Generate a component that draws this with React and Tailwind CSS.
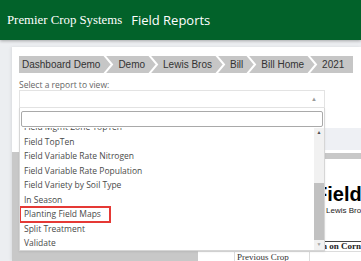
import React from "react";

const crumbs = ["Dashboard Demo", "Demo", "Lewis Bros", "Bill", "Bill Home", "2021"];

const reports = [
    "Field Mgmt Zone TopTen",
    "Field TopTen",
    "Field Variable Rate Nitrogen",
    "Field Variable Rate Population",
    "Field Variety by Soil Type",
    "In Season",
    "Planting Field Maps",
    "Split Treatment",
    "Validate",
];

const Chevron = () => (
    <svg width="18" height="17" viewBox="0 0 18 17" className="block shrink-0">
        <polyline
            points="4,-1 12,8.5 4,18"
            fill="none"
            stroke="#ffffff"
            strokeWidth="2"
        />
    </svg>
);

const Breadcrumb = () => (
    <div className="flex h-[17px] w-fit items-center bg-[#c6c6c6] pl-[3px] pr-[9px] font-['Liberation_Sans',Arial,sans-serif] text-[10px] text-[#333]">
        {crumbs.map((c, i) => (
            <React.Fragment key={c}>
                <span className="whitespace-nowrap leading-[17px]">{c}</span>
                {i < crumbs.length - 1 && <Chevron />}
            </React.Fragment>
        ))}
    </div>
);

const Dropdown = () => (
    <div className="absolute left-[19px] top-[108px] h-[143px] w-[306px] border border-t-0 border-[#d6d6d6] bg-white shadow-[0_1px_2px_rgba(0,0,0,0.08)]">
        <div className="mx-[1px] mt-[3px] h-[16px] rounded-[2px] border border-[#a9a9a9] bg-white" />
        <div className="mt-[1px] flex h-[122px] overflow-hidden">
            <div className="flex-1 overflow-hidden">
                <div className="-mt-[8px]">
                    {reports.map((r) => (
                        <div
                            key={r}
                            className="relative h-[14.5px] whitespace-nowrap pl-[4px] leading-[14.5px] text-[8.5px] text-[#4a4a4a]"
                        >
                            {r}
                            {r === "Planting Field Maps" && (
                                <span className="absolute left-[-1px] top-[-1px] h-[17px] w-[92px] border-2 border-[#e53935]" />
                            )}
                        </div>
                    ))}
                </div>
            </div>
            <div className="flex w-[10px] flex-col bg-[#f1f1f1]">
                <div className="flex h-[10px] items-center justify-center text-[5px] text-[#505050]">▲</div>
                <div className="h-[45px]" />
                <div className="h-[57px] bg-[#c1c1c1]" />
                <div className="flex h-[10px] items-center justify-center text-[5px] text-[#a3a3a3]">▼</div>
            </div>
        </div>
    </div>
);

const App = () => {
    return (
        <div className="relative h-[261px] w-[361px] overflow-hidden bg-[#eceef1] font-['Open_Sans',sans-serif]">
            <div className="flex h-[40px] items-center gap-[9px] bg-[#02622a] pl-[7px] text-white shadow-[0_1px_3px_rgba(0,0,0,0.3)]">
                <span className="font-['Liberation_Serif',serif] text-[12.8px] leading-none">
                    Premier Crop Systems
                </span>
                <span className="text-[13px] font-medium leading-none">Field Reports</span>
            </div>

            <div className="pl-[12px] pt-[7px]">
                <div className="h-[214px] bg-white pl-[7px] pt-[9px] shadow-[-1px_0_3px_rgba(0,0,0,0.08)]">
                    <Breadcrumb />
                    <div className="mt-[6px] h-[11px] text-[8.5px] leading-[11px] text-[#666]">
                        Select a report to view:
                    </div>
                    <div className="flex h-[18px] w-[306px] items-center justify-end border border-[#e3e3e3] pr-[7px] text-[6px] text-[#9a9a9a]">
                        ▲
                    </div>

                    <div className="-ml-[7px] h-[20px]" />
                    <div className="-ml-[7px] flex h-[133px]">
                        <div className="flex w-[186px] shrink-0 flex-col">
                            <div className="h-[24px] bg-white" />
                            <div className="flex-1 bg-[#c8c8c8]" />
                        </div>
                        <div className="flex min-w-0 flex-1 flex-col overflow-hidden">
                            <div className="h-[22px] bg-[#eef0f4]" />
                            <div className="h-[3px]" />
                            <div className="h-[6px] bg-[#c8c8c8]" />
                            <div className="mt-[24px] h-[23px] whitespace-nowrap pl-[117px] font-['Liberation_Sans',Arial,sans-serif] text-[20px] font-bold leading-[23px] text-black">
                                Field Report
                            </div>
                            <div className="h-[10px] whitespace-nowrap pl-[128px] font-['Liberation_Sans',Arial,sans-serif] text-[8px] leading-[10px] text-[#222]">
                                Lewis Bros
                            </div>
                            <div className="ml-[112px] mt-[25px] h-[10px] whitespace-nowrap border-t border-[#444] font-['Liberation_Serif',serif] text-[9px] font-bold leading-[9px] text-[#222]">
                                <span className="relative -left-[3px]">Corn on Corn</span>
                            </div>
                            <div className="flex h-[10px] border-t border-[#dcdcdc] font-['Liberation_Serif',serif] text-[9px] leading-[10px] text-[#333]">
                                <div className="w-[37px] shrink-0 border-r border-[#dcdcdc]" />
                                <div className="w-[75px] shrink-0 whitespace-nowrap border-r border-[#dcdcdc] pl-[2px]">
                                    Previous Crop
                                </div>
                                <div className="flex-1" />
                            </div>
                        </div>
                    </div>
                </div>
            </div>

            <Dropdown />
        </div>
    );
};

export default App;
